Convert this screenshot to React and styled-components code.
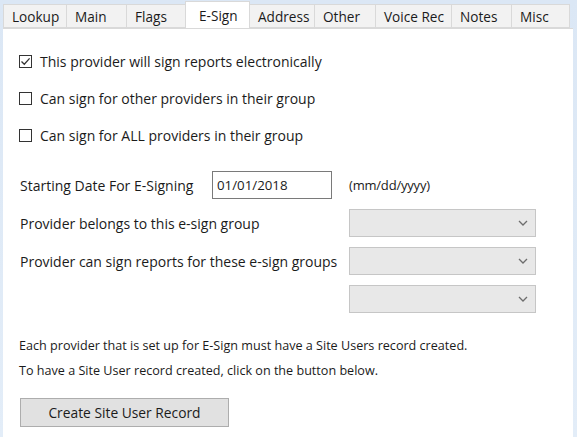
import React from "react";
import styled, { createGlobalStyle } from "styled-components";

const Global = createGlobalStyle`
  html, body { margin: 0; padding: 0; }
  body { background: #dce8f6; font-family: "Open Sans", "Noto Sans", sans-serif; }
`;

const Window = styled.div`
  width: 577px;
  height: 437px;
  display: flex;
  flex-direction: column;
  background: linear-gradient(#dbe7f5, #e3edf8);
  color: #1b1b1b;
  font-size: 14px;
  overflow: hidden;
`;

const TabStrip = styled.div`
  display: flex;
  align-items: flex-end;
  height: 28px;
  padding-left: 4px;
  flex: none;
`;

const Tab = styled.div`
  box-sizing: border-box;
  width: ${(p) => p.$w}px;
  height: ${(p) => (p.$active ? 27 : 24)}px;
  padding-left: ${(p) => (p.$active ? 13 : 8)}px;
  display: flex;
  align-items: center;
  background: ${(p) => (p.$active ? "#ffffff" : "#f2f2f2")};
  border: 1px solid #d9d9d9;
  border-bottom: ${(p) => (p.$active ? "none" : "1px solid #d9d9d9")};
  margin-left: -1px;
  position: relative;
  z-index: ${(p) => (p.$active ? 1 : 0)};
  font-size: 13.6px;
  padding-top: ${(p) => (p.$active ? 0 : 1)}px;
`;

const Panel = styled.div`
  flex: 1;
  margin-left: 3px;
  margin-right: 4px;
  background: #ffffff;
  border-top: 1px solid #d9d9d9;
  padding-left: 16px;
  display: flex;
  flex-direction: column;
`;

const CheckList = styled.div`
  margin-top: 14px;
  display: flex;
  flex-direction: column;
`;

const CheckRow = styled.label`
  height: 37px;
  display: flex;
  align-items: center;
  gap: 8px;
`;

const Box = styled.span`
  box-sizing: border-box;
  width: 13px;
  height: 13px;
  border: 1px solid #333333;
  background: #fff;
  display: flex;
  align-items: center;
  justify-content: center;
`;

const FormGrid = styled.div`
  margin-top: 17px;
  display: grid;
  grid-template-columns: 192px 137px 187px;
  grid-auto-rows: 28px;
  row-gap: 10px;
  align-items: center;
  padding-left: 1px;
`;

const Label = styled.div`
  grid-column: ${(p) => p.$span || "auto"};
  font-size: ${(p) => (p.$small ? "13px" : "14px")};
  letter-spacing: ${(p) => (p.$small ? "-0.2px" : "0")};
  white-space: nowrap;
`;

const DateInput = styled.div`
  box-sizing: border-box;
  width: 120px;
  height: 28px;
  border: 1px solid #7a7a7a;
  padding-left: 4px;
  display: flex;
  align-items: center;
  font-size: 13.3px;
`;

const Select = styled.div`
  box-sizing: border-box;
  height: 28px;
  border: 1px solid #c6c6c6;
  background: #e8e8e8;
  display: flex;
  align-items: center;
  justify-content: flex-end;
  padding-right: 7px;
`;

const Info = styled.div`
  margin-top: 20px;
  padding-left: 0;
  line-height: 25px;
  font-size: 12.6px;
`;

const Button = styled.div`
  box-sizing: border-box;
  margin-top: 15px;
  margin-left: 1px;
  width: 209px;
  height: 29px;
  border: 1px solid #adadad;
  background: #e1e1e1;
  display: flex;
  align-items: center;
  justify-content: center;
  font-size: 13.8px;
`;

const Check = () => (
  <svg width="11" height="11" viewBox="0 0 11 11">
    <path d="M1.5 5.5 L4.3 8.3 L9.6 2.4" fill="none" stroke="#333" strokeWidth="1.3" />
  </svg>
);

const Chevron = () => (
  <svg width="10" height="6" viewBox="0 0 10 6">
    <path d="M1 1 L5 5 L9 1" fill="none" stroke="#6d6d6d" strokeWidth="1.3" />
  </svg>
);

const tabs = [
  ["Lookup", 64],
  ["Main", 61],
  ["Flags", 60],
  ["E-Sign", 65],
  ["Address", 66],
  ["Other", 62],
  ["Voice Rec", 77],
  ["Notes", 61],
  ["Misc", 59],
];

export default function App() {
  return (
    <>
      <Global />
      <Window>
        <TabStrip>
          {tabs.map(([t, w]) => (
            <Tab key={t} $w={w} $active={t === "E-Sign"}>
              {t}
            </Tab>
          ))}
        </TabStrip>
        <Panel>
          <CheckList>
            <CheckRow>
              <Box>
                <Check />
              </Box>
              This provider will sign reports electronically
            </CheckRow>
            <CheckRow>
              <Box />
              Can sign for other providers in their group
            </CheckRow>
            <CheckRow>
              <Box />
              Can sign for ALL providers in their group
            </CheckRow>
          </CheckList>
          <FormGrid>
            <Label>Starting Date For E-Signing</Label>
            <DateInput>01/01/2018</DateInput>
            <Label $small>(mm/dd/yyyy)</Label>
            <Label $span="1 / 3">Provider belongs to this e-sign group</Label>
            <Select>
              <Chevron />
            </Select>
            <Label $span="1 / 3">Provider can sign reports for these e-sign groups</Label>
            <Select>
              <Chevron />
            </Select>
            <Label $span="1 / 3" />
            <Select>
              <Chevron />
            </Select>
          </FormGrid>
          <Info>
            Each provider that is set up for E-Sign must have a Site Users record created.
            <br />
            To have a Site User record created, click on the button below.
          </Info>
          <Button>Create Site User Record</Button>
        </Panel>
      </Window>
    </>
  );
}
